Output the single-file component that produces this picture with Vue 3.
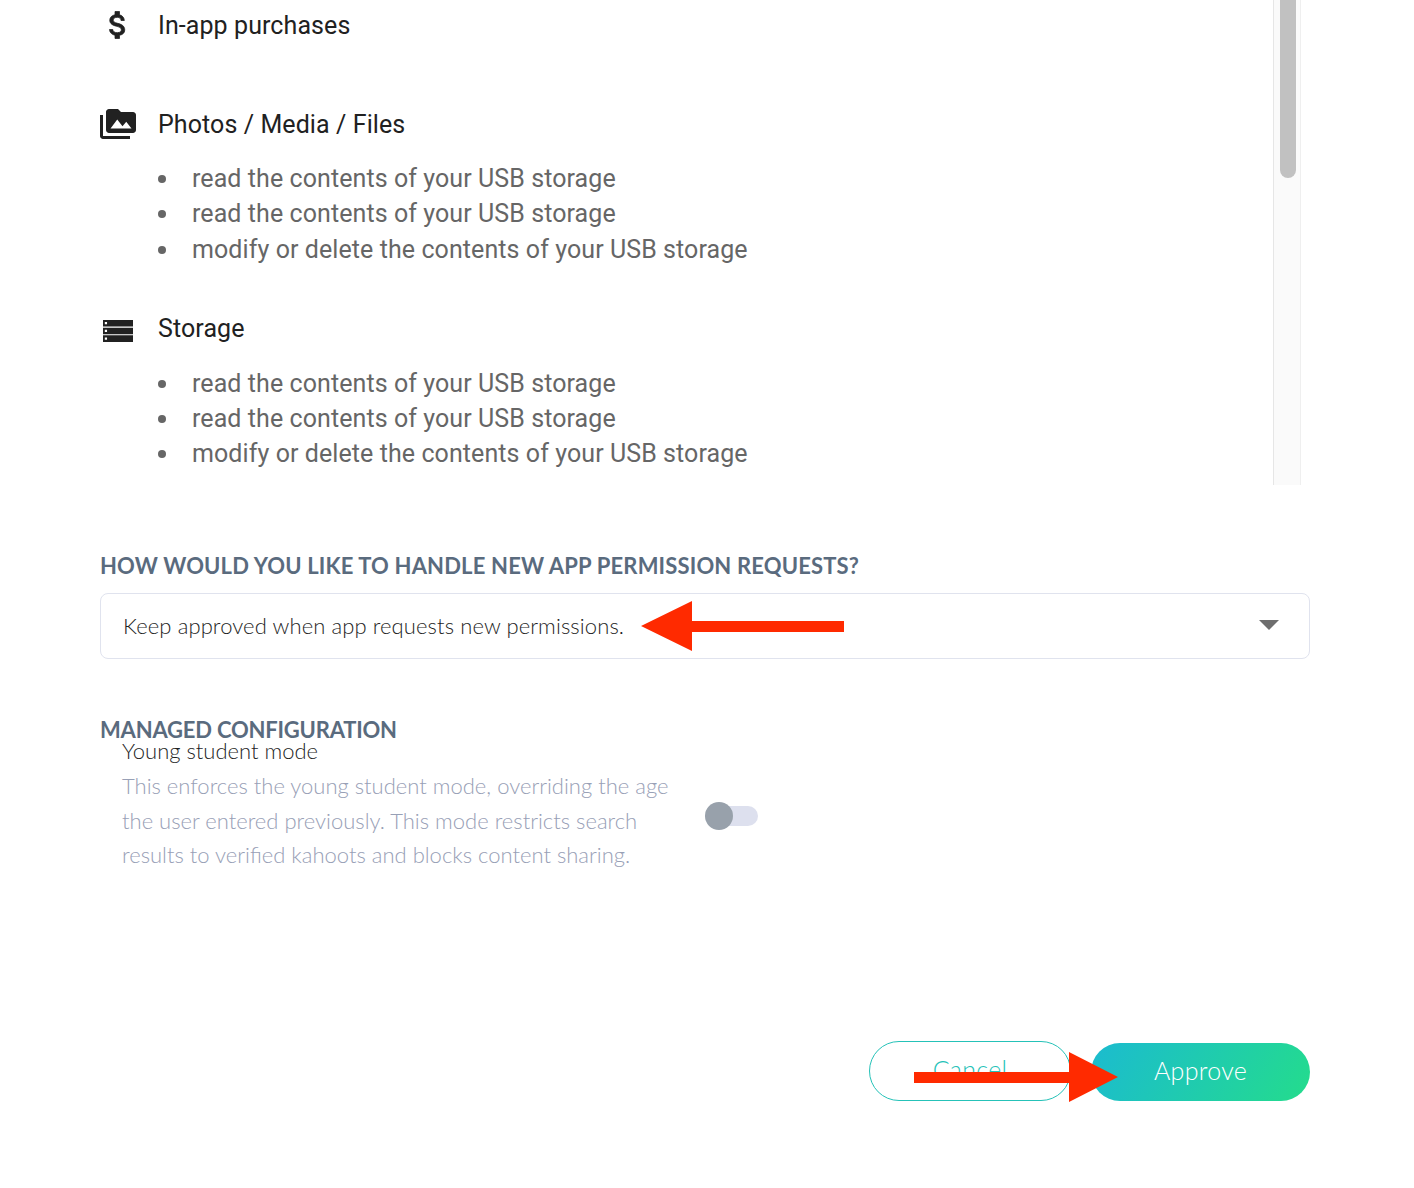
<script setup>
const sections = [
  { name: 'In-app purchases', icon: 'M11.8 10.9c-2.27-.59-3-1.2-3-2.15 0-1.09 1.01-1.85 2.7-1.85 1.78 0 2.44.85 2.5 2.1h2.21c-.07-1.72-1.12-3.3-3.21-3.81V3h-3v2.16c-1.94.42-3.5 1.68-3.5 3.61 0 2.31 1.91 3.46 4.7 4.13 2.5.6 3 1.48 3 2.41 0 .69-.49 1.79-2.7 1.79-2.06 0-2.87-.92-2.98-2.1h-2.2c.12 2.19 1.76 3.42 3.68 3.83V21h3v-2.15c1.95-.37 3.5-1.5 3.5-3.55 0-2.84-2.43-3.81-4.7-4.4z', bold: true, items: [] },
  {
    name: 'Photos / Media / Files',
    icon: 'M2 6H0v5h.01L0 20c0 1.1.9 2 2 2h18v-2H2V6zm20-2h-8l-2-2H6c-1.1 0-1.99.9-1.99 2L4 16c0 1.1.9 2 2 2h16c1.1 0 2-.9 2-2V6c0-1.1-.9-2-2-2zM7 15l4.5-6 3.5 4.51 2.5-3.01L21 15H7z',
    items: ['read the contents of your USB storage', 'read the contents of your USB storage', 'modify or delete the contents of your USB storage']
  },
  {
    name: 'Storage',
    icon: 'M2 6h20v4.4H2zM3.2 7.4v1.5h1.5V7.4zM2 11.1h20v4.4H2zM3.2 12.5V14h1.5v-1.5zM2 16.2h20v4.4H2zM3.2 17.6v1.5h1.5v-1.5z',
    items: ['read the contents of your USB storage', 'read the contents of your USB storage', 'modify or delete the contents of your USB storage']
  }
]
</script>

<template>
  <div class="page">
    <div class="scroller">
      <div class="perm-list">
        <section v-for="section in sections" :key="section.name" class="perm">
          <div class="perm-head">
            <svg :class="['perm-icon', { bold: section.bold }]" viewBox="0 0 24 24"><path :d="section.icon" /></svg>
            <span>{{ section.name }}</span>
          </div>
          <ul>
            <li v-for="(item, index) in section.items" :key="index">{{ item }}</li>
          </ul>
        </section>
      </div>
      <div class="scroll-track"><div class="scroll-thumb"></div></div>
    </div>

    <h3 class="label label-first">HOW WOULD YOU LIKE TO HANDLE NEW APP PERMISSION REQUESTS?</h3>
    <div class="select">
      <span>Keep approved when app requests new permissions.</span>
      <i class="caret"></i>
    </div>

    <h3 class="label label-second">MANAGED CONFIGURATION</h3>
    <div class="config">
      <div class="config-text">
        <div class="config-title">Young student mode</div>
        <p>This enforces the young student mode, overriding the age the user entered previously. This mode restricts search results to verified kahoots and blocks content sharing.</p>
      </div>
      <div class="toggle"><span class="knob"></span></div>
    </div>

    <div class="actions">
      <button type="button" class="btn cancel">Cancel</button>
      <button type="button" class="btn approve">Approve</button>
    </div>

    <svg class="arrows" viewBox="0 0 1414 1188">
      <polygon points="641,626 692,601 692,621 844,621 844,632 692,632 692,651" />
      <polygon points="914,1072 1069,1072 1069,1052 1118,1077 1069,1102 1069,1083 914,1083" />
    </svg>
  </div>
</template>

<style scoped>
.page {
  position: relative;
  width: 1414px;
  height: 1188px;
  overflow: hidden;
  background: #fff;
  font-family: "Lato", "Open Sans", sans-serif;
}

.scroller {
  display: flex;
  justify-content: space-between;
  height: 485px;
  margin-left: 100px;
  width: 1201px;
  overflow: hidden;
}

.perm-list {
  padding-top: 7px;
  font-family: Roboto, sans-serif;
}

.perm-head {
  display: flex;
  align-items: center;
  gap: 22px;
  height: 36px;
  font-size: 25px;
  letter-spacing: 0.09px;
  color: #212121;
}

.perm-icon {
  width: 36px;
  height: 36px;
  fill: #212121;
  fill-rule: evenodd;
}

.perm-icon.bold {
  stroke: #212121;
  stroke-width: 0.5;
}

ul {
  display: flow-root;
  margin: 19px 0 44px;
  padding: 0;
  list-style: none;
}

li {
  position: relative;
  padding-left: 92px;
  font-size: 25px;
  letter-spacing: 0.08px;
  line-height: 35.3px;
  color: #666;
}

li::before {
  content: '';
  position: absolute;
  left: 58px;
  top: 14px;
  width: 8px;
  height: 8px;
  border-radius: 50%;
  background: #666;
}

.scroll-track {
  width: 28px;
  padding: 0 4px 0 6px;
  box-sizing: border-box;
  background: #fafafa;
  border-left: 1px solid #e6e6e6;
  border-right: 1px solid #efefef;
}

.scroll-thumb {
  width: 16px;
  height: 178px;
  border-radius: 0 0 8px 8px;
  background: #c1c1c1;
}

.label {
  margin: 0 0 0 100px;
  font-size: 22px;
  font-weight: 700;
  line-height: 26px;
  color: #5a6b7e;
}

.label-first {
  margin-top: 68px;
  letter-spacing: 0.16px;
}

.label-second {
  margin-top: 60px;
  line-height: 22px;
  letter-spacing: -0.2px;
}

.select {
  display: flex;
  align-items: center;
  justify-content: space-between;
  box-sizing: border-box;
  width: 1210px;
  height: 66px;
  margin: 14px 0 0 100px;
  padding: 0 30px 2px 22px;
  border: 1px solid #e0e3ee;
  border-radius: 8px;
  font-size: 22px;
  font-weight: 300;
  letter-spacing: 0.1px;
  color: #1f1f1f;
}

.caret {
  width: 0;
  height: 0;
  border-left: 10px solid transparent;
  border-right: 10px solid transparent;
  border-top: 10px solid #6e6e6e;
}

.config {
  display: flex;
  align-items: center;
  margin: -1px 0 0 122px;
}

.config-text {
  width: 560px;
  font-size: 22px;
  font-weight: 300;
}

.config-title {
  line-height: 22px;
  color: #1f1f1f;
}

.config-text p {
  margin: 7px 0 0;
  line-height: 34.5px;
  color: #98a0b6;
}

.toggle {
  position: relative;
  width: 48px;
  height: 20px;
  margin: 20px 0 0 28px;
  border-radius: 10px;
  background: #dde0ee;
}

.knob {
  position: absolute;
  left: -5px;
  top: -4px;
  width: 28px;
  height: 28px;
  border-radius: 50%;
  background: #98a1ab;
}

.actions {
  display: flex;
  justify-content: flex-end;
  align-items: flex-end;
  gap: 20px;
  width: 1310px;
  margin-top: 168px;
}

.btn {
  height: 58px;
  padding: 0 0 4px;
  border-radius: 30px;
  font-family: inherit;
  font-size: 25px;
  font-weight: 300;
  letter-spacing: 0.3px;
}

.cancel {
  width: 202px;
  height: 60px;
  border: 1px solid #25c2b8;
  background: #fff;
  color: #25c2b8;
}

.approve {
  width: 219px;
  border: 0;
  background: linear-gradient(120deg, #1bbbd0, #24dc8c);
  color: #fff;
}

.arrows {
  position: absolute;
  left: 0;
  top: 0;
  width: 1414px;
  height: 1188px;
  fill: #ff2a00;
  pointer-events: none;
}
</style>
